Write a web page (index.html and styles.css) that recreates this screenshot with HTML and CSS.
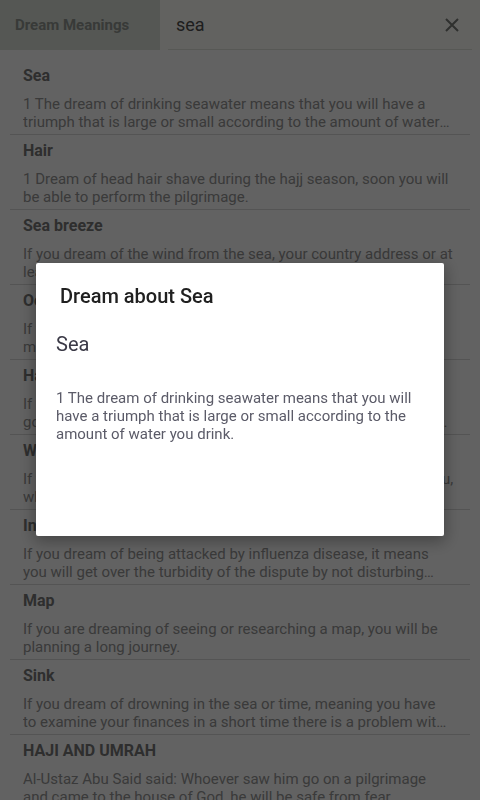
FILE: index.html
```html
<!DOCTYPE html>
<html lang="en-us">
  <head>
    <meta charset="utf-8" />
    <title>Dream Meanings</title>
    <link rel="stylesheet" href="styles.css">
  </head>

  <body>
    <div class="topbar">
      <div class="brand">Dream Meanings</div>
      <div class="search">
        <div class="searchField">
          <span class="query">sea</span>
          <svg class="clear" width="14" height="14" viewBox="0 0 14 14">
            <path d="M1 1 L13 13 M13 1 L1 13" stroke="#7a7d78" stroke-width="2" fill="none" />
          </svg>
        </div>
      </div>
    </div>

    <div class="results">
      <div class="item">
        <p class="title">Sea</p>
        <p class="desc">1 The dream of drinking seawater means that you will have a triumph that is large or small according to the amount of water you drink.</p>
      </div>
      <div class="item">
        <p class="title">Hair</p>
        <p class="desc">1 Dream of head hair shave during the hajj season, soon you will be able to perform the pilgrimage.</p>
      </div>
      <div class="item">
        <p class="title">Sea breeze</p>
        <p class="desc">If you dream of the wind from the sea, your country address or at least your home will change for the better soon.</p>
      </div>
      <div class="item">
        <p class="title">Ocean</p>
        <p class="desc">If you see a calm and clear sea water in your dream, it means much happiness awaits you.</p>
      </div>
      <div class="item">
        <p class="title">Harbor</p>
        <p class="desc">If you dream of standing in a quiet harbor, it means you will go&nbsp;on a long journey and find shelter and safety for your family and friends.</p>
      </div>
      <div class="item">
        <p class="title">Wave</p>
        <p class="desc">If you dream of seeing big waves of the sea coming towards you, which means trouble.</p>
      </div>
      <div class="item">
        <p class="title">Influenza</p>
        <p class="desc">If you dream of being attacked by influenza disease, it means you will get over the turbidity of the dispute by not disturbing your friends.</p>
      </div>
      <div class="item">
        <p class="title">Map</p>
        <p class="desc">If you are dreaming of seeing or researching a map, you will be planning a long journey.</p>
      </div>
      <div class="item">
        <p class="title">Sink</p>
        <p class="desc">If you dream of drowning in the sea or time, meaning you have to&nbsp;examine your finances in a short time there is a problem with your money.</p>
      </div>
      <div class="item">
        <p class="title">HAJI AND UMRAH</p>
        <p class="desc">Al-Ustaz Abu Said said: Whoever saw him go on a pilgrimage and came to the house of God, he will be safe from fear.</p>
      </div>
    </div>

    <!-- dimmed backdrop with the open dialog -->
    <div class="overlay">
      <div class="dialog">
        <h2 class="dialogTitle">Dream about Sea</h2>
        <div class="dialogBody">
          <p class="dialogName">Sea</p>
          <p class="dialogText">1 The dream of drinking seawater means that you will have a triumph that is large or small according to the amount of water you drink.</p>
        </div>
      </div>
    </div>
  </body>
</html>
```

FILE: styles.css
```css
html {
  font-family: Roboto, "Liberation Sans", sans-serif;
}

body {
  margin: 0;
  height: 800px;
  overflow: hidden;
  background-color: #fff;
}

.topbar {
  display: flex;
  height: 50px;
}

.brand {
  width: 160px;
  padding-left: 15px;
  box-sizing: border-box;
  display: flex;
  align-items: center;
  background-color: #dde2da;
  color: #929792;
  font-size: 15px;
  font-weight: 700;
}

.search {
  flex: 1;
  padding: 0 8px;
  background-color: #fffffa;
}

.searchField {
  height: 50px;
  box-sizing: border-box;
  display: flex;
  align-items: center;
  justify-content: space-between;
  padding: 0 13px 0 8px;
  border-bottom: 1px solid #e2e4de;
}

.query {
  font-size: 18px;
  color: #4e4e4e;
}

.results {
  margin: 10px 10px 0;
}

.item {
  padding: 5px 16px 3px 13px;
  border-bottom: 1px solid #dadada;
}

.item p {
  margin: 0;
}

.title {
  font-size: 16px;
  line-height: 22px;
  font-weight: 700;
  color: #787878;
  margin-bottom: 8px !important;
}

.desc {
  font-size: 15px;
  line-height: 18px;
  color: #969696;
  height: 36px;
  display: -webkit-box;
  -webkit-line-clamp: 2;
  -webkit-box-orient: vertical;
  overflow: hidden;
}

.overlay {
  position: fixed;
  inset: 0;
  display: flex;
  align-items: center;
  justify-content: center;
  background-color: rgba(0, 0, 0, 0.615);
}

.dialog {
  width: 408px;
  height: 273px;
  margin-top: -1px;
  background-color: #fff;
  border-radius: 2px;
  box-shadow: 0 4px 16px 2px rgba(0, 0, 0, 0.3);
}

.dialogTitle {
  margin: 0;
  padding: 19px 24px 0;
  font-size: 20px;
  line-height: 28px;
  font-weight: 500;
  color: #202020;
}

.dialogBody {
  padding: 20px 20px 0;
}

.dialogName {
  margin: 0 0 31px;
  font-size: 20px;
  line-height: 28px;
  color: #3a3946;
}

.dialogText {
  margin: 0;
  font-size: 15px;
  line-height: 18px;
  color: #5b5b68;
}
```
